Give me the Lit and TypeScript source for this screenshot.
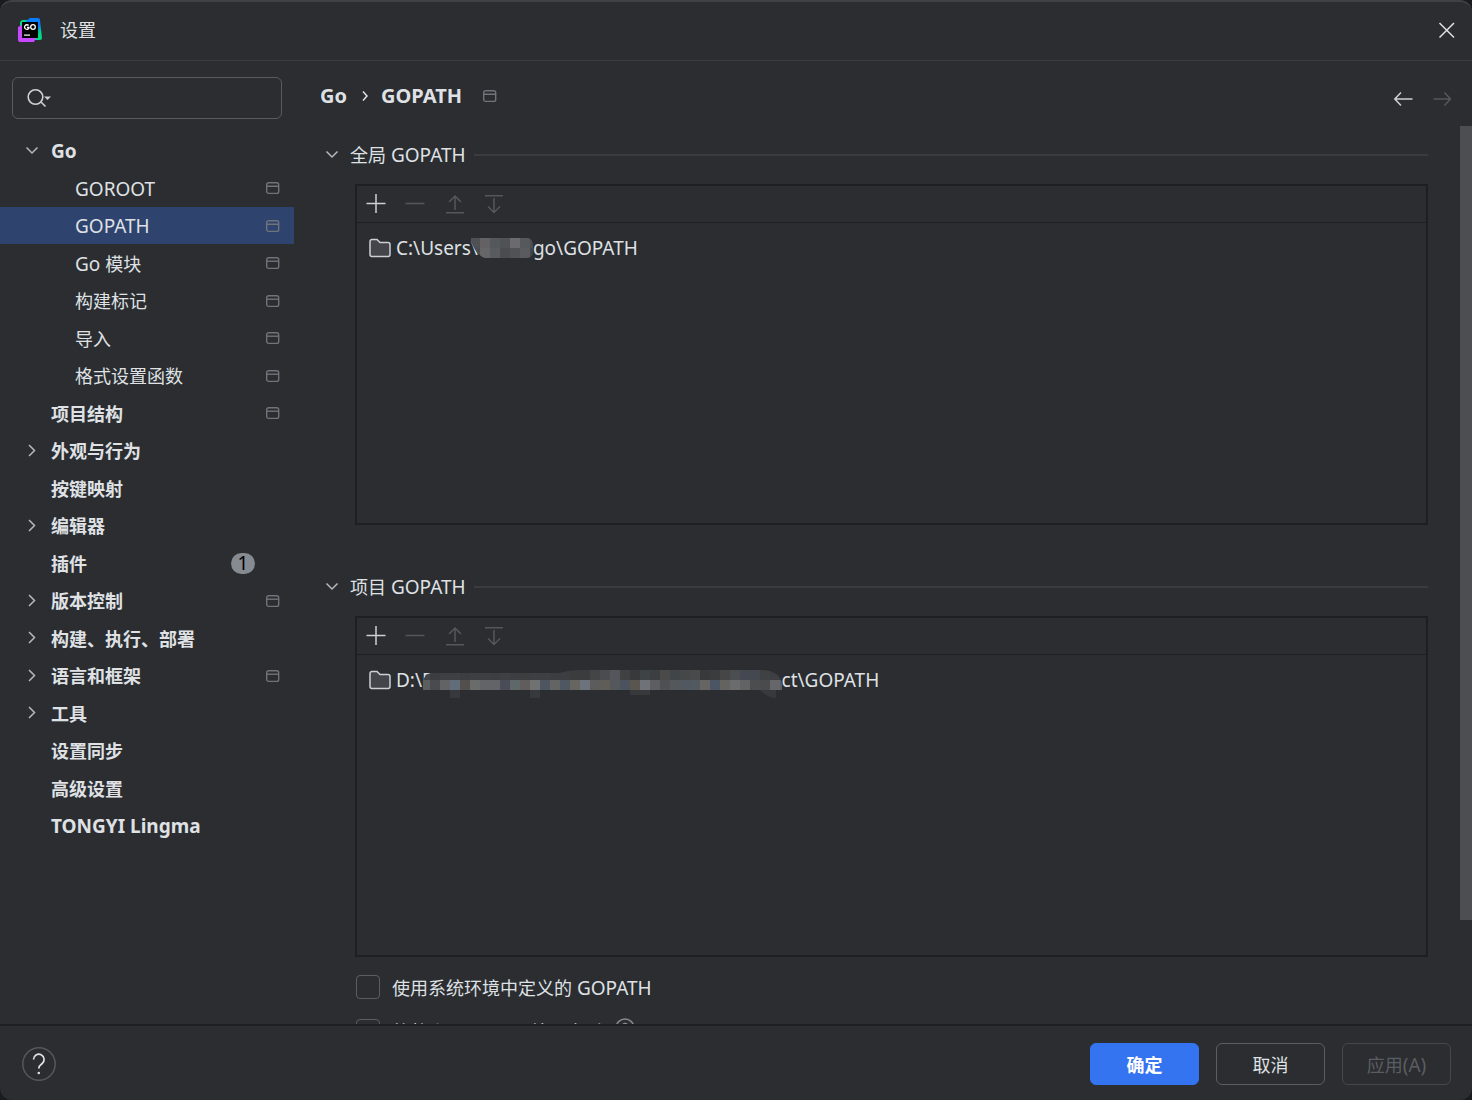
import { LitElement, html, css, svg, nothing } from "lit";
import { customElement, property } from "lit/decorators.js";

/** Latin runs are set one pixel larger than the CJK glyphs beside them. */
const mixed = (text: string) =>
  (text.match(/[\x20-\x7e]+|[^\x20-\x7e]+/g) ?? []).map((run) =>
    /^[\x20-\x7e]/.test(run) ? html`<span class="latin">${run}</span>` : run
  );

const stroke = (paths: string, w = 24, h = 24) => html`<svg
  width=${w}
  height=${h}
  viewBox="0 0 ${w} ${h}"
  aria-hidden="true"
>
  <path d=${paths} fill="none" stroke="currentColor" stroke-width="1.5" />
</svg>`;

const icons = {
  down: stroke("M6.500 8.500l5.500 5.500l5.500-5.500"),
  right: stroke("M9 6l5.500 5.500l-5.500 5.500"),
  close: stroke("M4.500 5l14.500 14.500M19 5l-14.500 14.500"),
  back: stroke("M20.500 13H3M9 6.500L2.800 13l6.200 6.500"),
  forward: stroke("M2.500 13H19.500M13.500 6.500L19.500 13l-6 6.500"),
  add: stroke("M12 2v19M2.500 11.500h19"),
  remove: stroke("M2.500 11.500h19"),
  up: stroke("M13 18V4.500M7 10l6-6l6 6M4 20.750h18"),
  bottom: stroke("M13 6v14M7 14.500l6 6l6-6M4 3.750h18"),
  crumb: stroke("M4 3.500l4 4.500l-4 4.500", 12, 16),
  scope: html`<svg class="scope" width="14" height="14" viewBox="0 0 14 14" aria-hidden="true">
    <rect x="0.700" y="1.700" width="12" height="10.700" rx="2" fill="none" stroke="currentColor" stroke-width="1.400" />
    <path d="M1 5.200h12" stroke="currentColor" stroke-width="1.400" />
  </svg>`,
  folder: html`<svg width="22" height="20" viewBox="0 0 22 20" aria-hidden="true">
    <path
      d="M1 3.500a2 2 0 0 1 2-2h5l3 3h8a2 2 0 0 1 2 2v10a2 2 0 0 1-2 2H3a2 2 0 0 1-2-2z"
      fill="#43454a"
      stroke="#ced0d6"
      stroke-width="1.500"
    />
  </svg>`,
  search: html`<svg width="28" height="24" viewBox="0 0 28 24" aria-hidden="true">
    <g fill="none" stroke="#ced0d6" stroke-width="1.600">
      <circle cx="9.500" cy="11" r="7.300" />
      <path d="M15 16l4.500 4.500" />
    </g>
    <path d="M18 10.500h7L21.500 14z" fill="#ced0d6" />
  </svg>`,
  logo: html`<svg width="24" height="24" viewBox="0 0 24 24" aria-hidden="true">
    <defs>
      <linearGradient id="edge" x1="0.400" y1="0" x2="1" y2="1">
        <stop offset="0.450" stop-color="#087cfa" />
        <stop offset="0.700" stop-color="#00d886" />
      </linearGradient>
    </defs>
    <path d="M2 4l2-2h8v8H2z" fill="#00d886" />
    <path d="M8 3l4-3h8a2 2 0 0 1 2 2l2 18a2 2 0 0 1-2 2H12z" fill="url(#edge)" />
    <path d="M0 9l4-2l14 13l-2 4H2a2 2 0 0 1-2-2z" fill="#c848ff" />
    <rect x="4" y="4" width="16" height="16" fill="#000" />
    <g fill="none" stroke="#fff" stroke-width="1.300">
      <path d="M10.600 7.500A2.300 2.300 0 1 0 11 10V9.500H9" />
      <circle cx="15" cy="9" r="2.300" />
    </g>
    <rect x="6" y="16.500" width="6" height="1.200" fill="#fff" />
  </svg>`,
  hint: html`<svg width="20" height="20" viewBox="0 0 20 20" aria-hidden="true">
    <circle cx="10" cy="10" r="9" fill="none" stroke="#868a91" stroke-width="1.500" />
    <path d="M7.500 8a2.500 2.500 0 1 1 3.500 2.300c-.8.400-1 .8-1 1.700M10 13.500v1.500" fill="none" stroke="#868a91" stroke-width="1.500" />
  </svg>`,
  help: html`<svg width="34" height="34" viewBox="0 0 34 34" aria-hidden="true">
    <circle cx="17" cy="17" r="16.200" fill="none" stroke="#55575c" stroke-width="1.500" />
    <path
      d="M11.500 12.500a5.300 5.300 0 1 1 8.500 4.200c-2 1.500-3.200 2.200-3.200 4.800"
      fill="none"
      stroke="#dfe1e5"
      stroke-width="1.700"
    />
    <circle cx="16.800" cy="26" r="1.300" fill="#dfe1e5" />
  </svg>`,
};

const shared = css`
  :host {
    display: block;
  }
  * {
    box-sizing: border-box;
  }
  svg {
    display: block;
    flex: none;
  }
  button {
    font: inherit;
    color: inherit;
    background: none;
    border: 0;
    padding: 0;
    display: flex;
    align-items: center;
    justify-content: center;
  }
  .latin {
    font-size: 19px;
    white-space: pre;
  }
  .scope {
    color: #6f737a;
  }
`;

interface Entry {
  label: string;
  level?: number;
  arrow?: "down" | "right";
  scope?: boolean;
  badge?: number;
  selected?: boolean;
}

const entries: Entry[] = [
  { label: "Go", arrow: "down" },
  { label: "GOROOT", level: 1, scope: true },
  { label: "GOPATH", level: 1, scope: true, selected: true },
  { label: "Go 模块", level: 1, scope: true },
  { label: "构建标记", level: 1, scope: true },
  { label: "导入", level: 1, scope: true },
  { label: "格式设置函数", level: 1, scope: true },
  { label: "项目结构", scope: true },
  { label: "外观与行为", arrow: "right" },
  { label: "按键映射" },
  { label: "编辑器", arrow: "right" },
  { label: "插件", badge: 1 },
  { label: "版本控制", arrow: "right", scope: true },
  { label: "构建、执行、部署", arrow: "right" },
  { label: "语言和框架", arrow: "right", scope: true },
  { label: "工具", arrow: "right" },
  { label: "设置同步" },
  { label: "高级设置" },
  { label: "TONGYI Lingma" },
];

@customElement("settings-tree")
export class SettingsTree extends LitElement {
  static styles = [
    shared,
    css`
      .search {
        display: flex;
        align-items: center;
        height: 42px;
        margin: 0 12px 13px;
        padding: 0 13px;
        border: 1px solid #575a60;
        border-radius: 6px;
      }
      .search input {
        flex: 1;
        min-width: 0;
        font: inherit;
        color: inherit;
        background: none;
        border: 0;
        outline: 0;
      }
      ul {
        list-style: none;
        margin: 0;
        padding: 0;
      }
      li:nth-child(odd) {
        height: 37px;
      }
      li:nth-child(even) {
        height: 38px;
      }
      .row {
        width: 100%;
        height: 100%;
        padding: 0 14px 0 20px;
        justify-content: flex-start;
        font-weight: 700;
        text-align: left;
      }
      .child {
        padding-left: 44px;
        font-weight: 400;
      }
      .selected {
        background: #2e436e;
      }
      .arrow {
        width: 24px;
        margin-right: 7px;
        color: #b4b8bf;
      }
      .label {
        flex: 1;
        padding-top: 1px;
      }
      .badge {
        width: 24px;
        margin-right: 25px;
        border-radius: 11px;
        background: #868a91;
        color: #000;
        font-size: 19px;
        font-weight: 400;
        line-height: 21px;
        text-align: center;
      }
    `,
  ];

  render() {
    return html`
      <div class="search">
        ${icons.search}
        <input type="text" aria-label="搜索" />
      </div>
      <ul>
        ${entries.map(
          (e) => html`<li>
            <button class="row ${e.level ? "child" : ""} ${e.selected ? "selected" : ""}">
              <span class="arrow">${e.arrow ? icons[e.arrow] : nothing}</span>
              <span class="label">${mixed(e.label)}</span>
              ${e.badge ? html`<span class="badge">${e.badge}</span>` : nothing}
              ${e.scope ? icons.scope : nothing}
            </button>
          </li>`
        )}
      </ul>
    `;
  }
}

/** A pixelated patch over part of a path: rows of 10px cells cut to an outline. */
interface Mosaic {
  width: number;
  height: number;
  first: number;
  overlap: number;
  outline: string;
  rows: { y: number; colors: string }[];
}

const userMosaic: Mosaic = {
  width: 62,
  height: 20,
  first: 9,
  overlap: 7,
  outline: "M0 0H56Q62 0 62 8V14Q62 20 55 20H14Q6 18 0 4z",
  rows: [
    { y: 0, colors: "505153 636163 55585b 505254 6b6a6e 57585b 4d4e52" },
    { y: 10, colors: "4b4c4f 666568 5a5b5f 4b4c4f 515256 5a5b5e 444548" },
  ],
};

const projectMosaic: Mosaic = {
  width: 359,
  height: 28,
  first: 7,
  overlap: 11,
  outline:
    "M0 20V12Q1 4 8 3H136Q146 0 156 0H340Q357 1 359 14V20H353V28Q345 28 337 20H227V25H207V20H117V28H107V20H37V28H27V20z",
  rows: [
    {
      y: 0,
      colors:
        "434447 3c3d40 3f4043 3f4042 3c3d3f 3e3f42 3e3f42 3d3e40 3f4043 3d3e41 3c3e40 3d3f42 3e3f42 3c3d40 3d3e42 3b3c3e 3b3c3e 444547 4a4c4f 54565b 404143 38393b 3e4346 3d3e41 4a4a4a 404548 464748 4a4a4b 38393b 3b3c3e 464646 4b4d50 444850 444850 3f4143 3e3f42 3e3f42",
    },
    {
      y: 10,
      colors:
        "5c5f60 4a4b4f 626364 626d7b 524f4c 6a6b6b 626468 626468 4a4d57 5e6869 605d5c 707272 4c5560 626561 4f5763 66655f 6c737d 5c5c5c 605c58 55585b 4b545e 5b554f 6f7278 5c5e61 4e5053 54585b 515860 525960 676562 4b5563 64635f 6a6c6d 636363 4c4d4e 4a4b4d 66676b 5c5d60",
    },
    { y: 20, colors: Array(37).fill("37393c").join(" ") },
  ],
};

@customElement("path-group")
export class PathGroup extends LitElement {
  @property() heading = "";
  @property() before = "";
  @property() after = "";
  @property({ attribute: false }) mosaic: Mosaic = userMosaic;

  static styles = [
    shared,
    css`
      .heading {
        display: flex;
        align-items: center;
        height: 29px;
        margin-bottom: 15px;
      }
      .heading button {
        gap: 6px;
      }
      .heading svg {
        color: #b4b8bf;
      }
      .rule {
        flex: 1;
        height: 2px;
        margin-left: 8px;
        background: #393b40;
      }
      .box {
        height: 341px;
        margin-left: 35px;
        border: 2px solid #1e1f22;
      }
      .tools {
        display: flex;
        gap: 15px;
        height: 37px;
        padding: 0 7px;
        border-bottom: 1px solid #1e1f22;
        color: #ced0d6;
      }
      .tools button:disabled {
        color: #55575b;
      }
      .path {
        display: flex;
        align-items: center;
        height: 38px;
        margin-top: 6px;
        padding: 0 12px;
      }
      .before {
        margin-left: 5px;
      }
      .mosaic {
        position: relative;
        align-self: flex-start;
        margin-top: 9px;
      }
    `,
  ];

  private renderMosaic() {
    const { width, height, first, overlap, outline, rows } = this.mosaic;
    return html`<svg
      class="mosaic"
      style="margin-left:${-overlap}px"
      width=${width}
      height=${height}
      viewBox="0 0 ${width} ${height}"
      aria-hidden="true"
    >
      <clipPath id="outline"><path d=${outline} /></clipPath>
      <g clip-path="url(#outline)" shape-rendering="crispEdges">
        ${rows.map((row) =>
          row.colors
            .split(" ")
            .map((c, i) => svg`<rect x=${first + (i - 1) * 10} y=${row.y} width="10" height="10" fill="#${c}" />`)
        )}
      </g>
    </svg>`;
  }

  render() {
    return html`
      <div class="heading">
        <button>${icons.down}<span>${mixed(this.heading)}</span></button>
        <div class="rule"></div>
      </div>
      <div class="box">
        <div class="tools">
          <button aria-label="添加">${icons.add}</button>
          <button aria-label="移除" disabled>${icons.remove}</button>
          <button aria-label="上移" disabled>${icons.up}</button>
          <button aria-label="下移" disabled>${icons.bottom}</button>
        </div>
        <div class="path">
          ${icons.folder}<span class="latin before">${this.before}</span>${this.renderMosaic()}<span class="latin"
            >${this.after}</span
          >
        </div>
      </div>
    `;
  }
}

@customElement("app-root")
export class AppRoot extends LitElement {
  static styles = [
    shared,
    css`
      :host {
        height: 100vh;
        background: #1a1b1e;
        color: #dfe1e5;
        font: 18px/26px "Noto Sans", "Noto Sans CJK SC", sans-serif;
      }
      .window {
        display: flex;
        flex-direction: column;
        height: 100%;
        overflow: hidden;
        border-top: 2px solid #3f4144;
        border-radius: 12px;
        background: #2b2d30;
      }
      .title {
        display: flex;
        align-items: center;
        gap: 18px;
        height: 59px;
        padding: 0 13px 3px 18px;
        border-bottom: 1px solid #3a3c42;
      }
      .name {
        flex: 1;
      }
      .main {
        display: flex;
        flex: 1;
        min-height: 0;
      }
      .side {
        flex: none;
        width: 294px;
        padding-top: 16px;
      }
      .content {
        display: flex;
        flex: 1;
        flex-direction: column;
        min-width: 0;
      }
      .crumbs {
        display: flex;
        align-items: center;
        height: 65px;
        padding: 5px 17px 1px 26px;
        font-size: 20px;
        font-weight: 700;
      }
      .crumbs .sep {
        margin: 0 10px 0 12px;
      }
      .crumbs .scope {
        margin-left: 21px;
      }
      .nav {
        display: flex;
        gap: 15px;
        margin-left: auto;
        padding-top: 5px;
        color: #ced0d6;
      }
      .nav button:disabled {
        color: #55575b;
      }
      .scroll {
        display: flex;
        flex: 1;
        min-height: 0;
      }
      .page {
        display: flex;
        flex: 1;
        flex-direction: column;
        gap: 47px;
        padding: 14px 32px 0 26px;
        overflow-y: auto;
        scrollbar-width: none;
      }
      .thumb {
        width: 12px;
        margin-bottom: 104px;
        background: #4d4e51;
      }
      .checks {
        display: grid;
        gap: 16px;
        margin: -30px 0 0 36px;
      }
      .check {
        display: flex;
        gap: 12px;
        height: 28px;
      }
      .check .text {
        padding-top: 1px;
      }
      .check input {
        appearance: none;
        width: 24px;
        height: 24px;
        margin: 1px 0 0;
        border: 1px solid #5a5d63;
        border-radius: 4px;
      }
      .footer {
        display: flex;
        flex: none;
        align-items: center;
        gap: 17px;
        height: 76px;
        padding: 1px 21px 0 22px;
        border-top: 2px solid #1e1f22;
      }
      .help {
        margin-right: auto;
      }
      .action {
        width: 109px;
        height: 42px;
        padding-top: 2px;
        border: 1px solid #5a5d63;
        border-radius: 6px;
      }
      .primary {
        border-color: #3574f0;
        background: #3574f0;
        color: #fff;
        font-weight: 700;
      }
      .action:disabled {
        border-color: #45474b;
        color: #5a5d63;
      }
    `,
  ];

  render() {
    return html`
      <div class="window">
        <header class="title">
          ${icons.logo}<span class="name">设置</span>
          <button aria-label="关闭">${icons.close}</button>
        </header>
        <div class="main">
          <nav class="side"><settings-tree></settings-tree></nav>
          <main class="content">
            <div class="crumbs">
              <span>Go</span>
              <span class="sep">${icons.crumb}</span>
              <span>GOPATH</span>
              ${icons.scope}
              <div class="nav">
                <button aria-label="后退">${icons.back}</button>
                <button aria-label="前进" disabled>${icons.forward}</button>
              </div>
            </div>
            <div class="scroll">
              <div class="page">
                <path-group heading="全局 GOPATH" before="C:\\Users\\" after="go\\GOPATH" .mosaic=${userMosaic}></path-group>
                <path-group heading="项目 GOPATH" before="D:\\P" after="ct\\GOPATH" .mosaic=${projectMosaic}></path-group>
                <div class="checks">
                  <label class="check"
                    ><input type="checkbox" /><span class="text">${mixed("使用系统环境中定义的 GOPATH")}</span></label
                  >
                  <label class="check"
                    ><input type="checkbox" /><span class="text">${mixed("将整个 GOPATH 编入索引")}</span>${icons.hint}</label
                  >
                </div>
              </div>
              <div class="thumb"></div>
            </div>
          </main>
        </div>
        <footer class="footer">
          <button class="help" aria-label="帮助">${icons.help}</button>
          <button class="action primary">确定</button>
          <button class="action">取消</button>
          <button class="action" disabled><span>${mixed("应用(A)")}</span></button>
        </footer>
      </div>
    `;
  }
}
